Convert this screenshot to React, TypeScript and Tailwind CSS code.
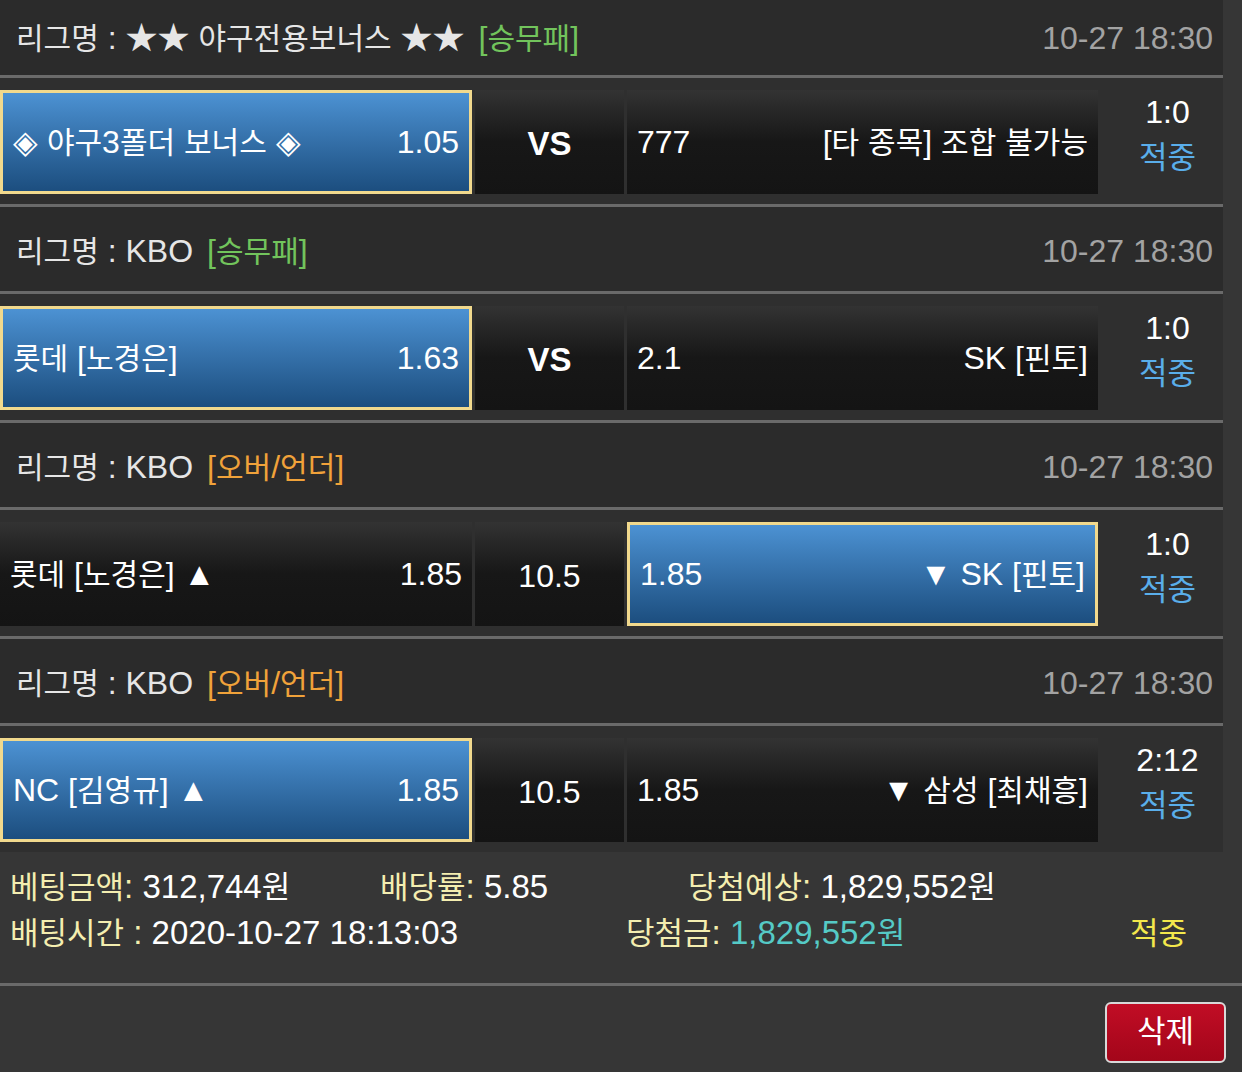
import React from "react";

type Side = { name: string; odds: string; sel?: boolean };
type Bet = {
  league: string;
  type: string;
  typeColor: string;
  home: Side;
  mid: string;
  midBold?: boolean;
  away: Side;
  score: string;
};

const bets: Bet[] = [
  {
    league: "★★ 야구전용보너스 ★★",
    type: "[승무패]",
    typeColor: "text-[#72c45c]",
    home: { name: "◈ 야구3폴더 보너스 ◈", odds: "1.05", sel: true },
    mid: "VS",
    midBold: true,
    away: { odds: "777", name: "[타 종목] 조합 불가능" },
    score: "1:0",
  },
  {
    league: "KBO",
    type: "[승무패]",
    typeColor: "text-[#72c45c]",
    home: { name: "롯데 [노경은]", odds: "1.63", sel: true },
    mid: "VS",
    midBold: true,
    away: { odds: "2.1", name: "SK [핀토]" },
    score: "1:0",
  },
  {
    league: "KBO",
    type: "[오버/언더]",
    typeColor: "text-[#f0a23a]",
    home: { name: "롯데 [노경은] ▲", odds: "1.85" },
    mid: "10.5",
    away: { odds: "1.85", name: "▼ SK [핀토]", sel: true },
    score: "1:0",
  },
  {
    league: "KBO",
    type: "[오버/언더]",
    typeColor: "text-[#f0a23a]",
    home: { name: "NC [김영규] ▲", odds: "1.85", sel: true },
    mid: "10.5",
    away: { odds: "1.85", name: "▼ 삼성 [최채흥]" },
    score: "2:12",
  },
];

// hangul runs a bit smaller so the CJK font's wide glyphs keep the original width
function T({ s, k = "text-[30px]" }: { s: string; k?: string }) {
  const parts = s.split(/([\uAC00-\uD7A3]+)/);
  return (
    <>
      {parts.map((p, i) =>
        /[\uAC00-\uD7A3]/.test(p) ? (
          <span key={i} className={k}>
            {p}
          </span>
        ) : (
          <React.Fragment key={i}>{p}</React.Fragment>
        )
      )}
    </>
  );
}

const cellBase = "shrink-0 h-[104px] flex items-center justify-between px-[10px] text-white";
const darkCell = "bg-gradient-to-b from-[#333333] via-[#171717] to-[#141414]";
const blueCell = "bg-gradient-to-b from-[#4c92d3] to-[#1c4e7f] border-[3px] border-[#f1d98d]";

function Line() {
  return <div className="h-[3px] bg-[#6a6a6a]" />;
}

function BetBlock({ bet, first }: { bet: Bet; first: boolean }) {
  return (
    <div>
      {!first && <Line />}
      <div className={`${first ? "h-[75px]" : "h-[84px] pt-[4px]"} bg-[#2b2b2b] flex items-center justify-between pl-[16px] pr-[10px]`}>
        <div className="text-[#e6e6e6]">
          <T s={`리그명 : ${bet.league}`} />
          <span className={`ml-[14px] ${bet.typeColor}`}>
            <T s={bet.type} />
          </span>
        </div>
        <div className="text-[#a3a3a3]">10-27 18:30</div>
      </div>
      <Line />
      <div className="bg-[#2f2f2f] pt-[12px] pb-[10px] flex">
        <div className="flex gap-[3px]">
          <div className={`w-[472px] ${cellBase} ${bet.home.sel ? blueCell : darkCell}`}>
            <span><T s={bet.home.name} /></span>
            <span>{bet.home.odds}</span>
          </div>
          <div className={`shrink-0 w-[149px] h-[104px] flex items-center justify-center text-white pt-[4px] ${darkCell} ${bet.midBold ? "font-bold text-[33px]" : ""}`}>
            {bet.mid}
          </div>
          <div className={`w-[471px] ${cellBase} ${bet.away.sel ? blueCell : darkCell}`}>
            <span>{bet.away.odds}</span>
            <span><T s={bet.away.name} /></span>
          </div>
        </div>
        <div className="shrink-0 w-[125px] h-[104px] pl-[14px] flex flex-col items-center leading-[45px]">
          <span className="text-white">{bet.score}</span>
          <span className="text-[#5aaeea]"><T s="적중" k="text-[31px]" /></span>
        </div>
      </div>
    </div>
  );
}

export default function App() {
  return (
    <div className="w-[1242px] h-[1072px] overflow-hidden bg-[#363636] text-[32px] font-['Liberation_Sans','Noto_Sans_CJK_KR',sans-serif]">
      <div className="w-[1223px]">
        {bets.map((b, i) => (
          <BetBlock key={i} bet={b} first={i === 0} />
        ))}
      </div>

      <div className="pt-[12px] pb-[27px] pl-[10px] leading-[45px] text-white text-[33px]">
        <div className="flex">
          <div className="w-[370px]">
            <span className="text-[#f4eeb0]"><T s="베팅금액" k="text-[31px]" />:</span> 312,744<T s="원" k="text-[31px]" />
          </div>
          <div className="w-[308px]">
            <span className="text-[#f4eeb0]"><T s="배당률" k="text-[31px]" />:</span> 5.85
          </div>
          <div>
            <span className="text-[#f4eeb0]"><T s="당첨예상" k="text-[31px]" />:</span> 1,829,552<T s="원" k="text-[31px]" />
          </div>
        </div>
        <div className="flex">
          <div className="w-[616px]">
            <span className="text-[#f4eeb0]"><T s="배팅시간" k="text-[31px]" /> :</span> 2020-10-27 18:13:03
          </div>
          <div className="w-[504px]">
            <span className="text-[#f4eeb0]"><T s="당첨금" k="text-[31px]" />:</span>{" "}
            <span className="text-[#55cac6]">1,829,552<T s="원" k="text-[31px]" /></span>
          </div>
          <div className="text-[#f3e84c]"><T s="적중" k="text-[31px]" /></div>
        </div>
      </div>
      <div className="h-[3px] bg-[#6a6a6a]" />
      <div className="flex justify-end pt-[16px] pr-[16px]">
        <button className="w-[121px] h-[61px] rounded-[6px] border-2 border-[#d9d9d9] bg-gradient-to-b from-[#c10d25] to-[#a3061a] text-white flex items-center justify-center">
          <T s="삭제" k="text-[31px]" />
        </button>
      </div>
    </div>
  );
}
